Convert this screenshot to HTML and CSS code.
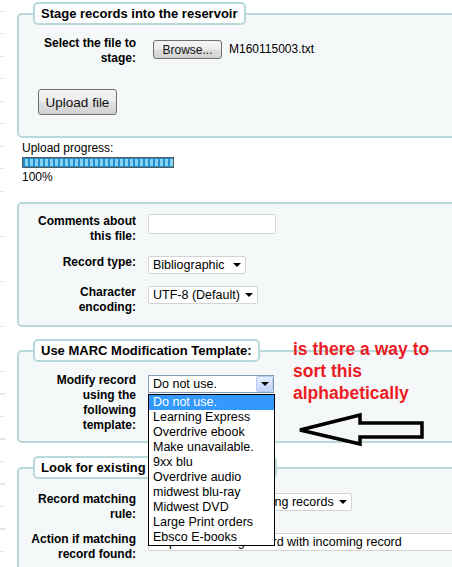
FILE: index.html
```html
<!DOCTYPE html>
<html lang="en">
<head>
  <meta charset="UTF-8">
  <meta name="viewport" content="width=device-width, initial-scale=1.0">
  <title>Stage MARC records for import</title>
  <link rel="stylesheet" href="styles.css">
</head>
<body>
  <div class="sidebar"></div>

  <div class="main">
    <fieldset class="rows stage">
      <legend>Stage records into the reservoir</legend>
      <div class="row">
        <label for="fileToUpload" class="row-label">Select the file to stage:</label>
        <div class="file-field" id="fileToUpload">
          <button type="button" class="btn-browse">Browse...</button>
          <span class="file-name">M160115003.txt</span>
        </div>
      </div>
      <button type="button" class="btn-upload">Upload file</button>
    </fieldset>

    <div class="progress">
      <div>Upload progress:</div>
      <div class="progress-bar"></div>
      <div>100%</div>
    </div>

    <fieldset class="rows options">
      <div class="row">
        <label for="comments" class="row-label">Comments about this file:</label>
        <input type="text" id="comments" class="text-input">
      </div>
      <div class="row">
        <label for="recordType" class="row-label">Record type:</label>
        <span class="select">
          <select id="recordType" class="w-record-type">
            <option>Bibliographic</option>
          </select>
        </span>
      </div>
      <div class="row">
        <label for="encoding" class="row-label">Character encoding:</label>
        <span class="select">
          <select id="encoding" class="w-encoding">
            <option>UTF-8 (Default)</option>
          </select>
        </span>
      </div>
    </fieldset>

    <fieldset class="rows template">
      <legend>Use MARC Modification Template:</legend>
      <div class="row">
        <label for="template" class="row-label">Modify record using the following template:</label>
        <span class="select select-xp">
          <select id="template" class="w-template">
            <option>Do not use.</option>
          </select>
          <ul class="select-menu">
            <li class="is-selected">Do not use.</li>
            <li>Learning Express</li>
            <li>Overdrive ebook</li>
            <li>Make unavailable.</li>
            <li>9xx blu</li>
            <li>Overdrive audio</li>
            <li>midwest blu-ray</li>
            <li>Midwest DVD</li>
            <li>Large Print orders</li>
            <li>Ebsco E-books</li>
          </ul>
        </span>
      </div>
    </fieldset>

    <fieldset class="rows matching">
      <legend>Look for existing records in catalog?</legend>
      <div class="row">
        <label for="matchRule" class="row-label">Record matching rule:</label>
        <span class="select">
          <select id="matchRule" class="w-rule">
            <option>Do not look for matching records</option>
          </select>
        </span>
      </div>
      <div class="row">
        <label for="overlayAction" class="row-label">Action if matching record found:</label>
        <span class="select">
          <select id="overlayAction" class="w-action">
            <option>Replace existing record with incoming record</option>
          </select>
        </span>
      </div>
    </fieldset>

    <p class="note">is there a way to sort this alphabetically</p>
    <svg class="note-arrow" width="128" height="36" viewBox="0 0 128 36">
      <polygon points="2,18 62,3 62,11 124,11 124,25 62,25 62,32" fill="none" stroke="#000" stroke-width="3.5"/>
    </svg>
  </div>
</body>
</html>
```

FILE: styles.css
```css
:root {
  --field-border: #b9d8d9;
  --field-bg: #f4f8f9;
  --control-border: #d4d4d4;
  --note-red: #ed1c24;
}

html,
body {
  height: 100%;
  overflow: hidden;
}

body {
  margin: 0;
  display: flex;
  background: #fff;
  color: #000;
  font-family: "Liberation Sans", Arial, sans-serif;
  font-size: 12px;
  line-height: 15px;
}

/* edge of the left menu, mostly cut off */
.sidebar {
  flex: none;
  width: 5px;
  background: repeating-linear-gradient(to bottom, transparent 0 11px, #e6e6e6 11px 12px, transparent 12px 22.5px);
}

.main {
  position: relative;
  flex: none;
  width: 460px;
  margin-left: 12px;
}

.rows {
  margin: 0;
  padding: 11px 0 10px 10px;
  min-width: 0;
  border: 2px solid var(--field-border);
  border-radius: 5px;
  background: var(--field-bg);
}

.rows legend {
  margin-left: 4px;
  padding: 2px 6px;
  border: 2px solid var(--field-border);
  border-radius: 5px;
  background: #fff;
  font-size: 13px;
  font-weight: bold;
  line-height: 15px;
}

.stage {
  margin-top: 2px;
  padding-bottom: 21px;
}

.options {
  margin-top: 17px;
  padding-top: 10px;
}

.template {
  margin-top: 12px;
  padding-bottom: 8px;
}

.matching {
  margin-top: 13px;
  padding-top: 13px;
}

.row {
  display: grid;
  grid-template-columns: 107px auto;
  column-gap: 12px;
  align-items: start;
  justify-content: start;
}

.row + .row {
  margin-top: 11px;
}

.matching .row + .row {
  margin-top: 10px;
}

.row-label {
  text-align: right;
  font-weight: bold;
}

.file-field {
  display: flex;
  align-items: center;
  gap: 7px;
  margin: 4px 0 0 5px;
}

.btn-browse,
.btn-upload {
  padding: 0;
  border: 1px solid #707070;
  border-radius: 3px;
  background: linear-gradient(#f4f4f4, #ececec 48%, #dfdfdf 52%, #d2d2d2);
  color: #111;
  font-family: "Liberation Sans", Arial, sans-serif;
}

.btn-browse {
  width: 69px;
  height: 19px;
  font-size: 12px;
}

.btn-upload {
  display: block;
  width: 79px;
  height: 26px;
  margin: 23px 0 0 9px;
  font-size: 13.5px;
}

.progress {
  margin-top: 3px;
  padding-left: 5px;
}

.progress-bar {
  box-sizing: border-box;
  width: 152px;
  height: 11px;
  margin: 1px 0 2px;
  border: 1px solid #58595b;
  background: repeating-linear-gradient(90deg, #1f8fd0 0 2px, #88d2f4 2px 5px);
  box-shadow: inset 0 1px 0 #1f8fd0, inset 0 -1px 0 #1f8fd0;
}

.text-input {
  box-sizing: border-box;
  width: 128px;
  height: 20px;
  margin: 0;
  padding: 0 3px;
  border: 1px solid var(--control-border);
  border-radius: 2px;
  background: #fff;
}

.select {
  position: relative;
  display: inline-block;
  margin-top: 1px;
}

.select select {
  display: block;
  box-sizing: border-box;
  height: 18px;
  margin: 0;
  padding: 0 12px 0 4px;
  border: 1px solid var(--control-border);
  border-radius: 2px;
  background: #fff;
  color: #000;
  font-family: "Liberation Sans", Arial, sans-serif;
  font-size: 12.5px;
  appearance: none;
  -webkit-appearance: none;
}

.select::after {
  content: "";
  position: absolute;
  top: 7px;
  right: 5px;
  border-top: 4px solid #000;
  border-left: 4px solid transparent;
  border-right: 4px solid transparent;
  pointer-events: none;
}

.w-record-type { width: 98px; }
.w-encoding { width: 110px; }
.w-template { width: 126px; }
.w-rule { width: 204px; }
.w-action { width: 330px; }

/* old XP style combo with the list dropped open */
.select-xp {
  margin-top: 2px;
}

.select-xp select {
  border-color: #7f9db9;
  border-radius: 0;
}

.select-xp::before {
  content: "";
  position: absolute;
  top: 1px;
  right: 1px;
  bottom: 1px;
  width: 15px;
  border: 1px solid #b7cbf5;
  border-radius: 2px;
  background: linear-gradient(#e3ecfd, #c2d4fb);
}

.select-menu {
  position: absolute;
  top: calc(100% + 1px);
  left: 0;
  z-index: 2;
  box-sizing: border-box;
  width: 127px;
  margin: 0;
  padding: 0;
  list-style: none;
  border: 1px solid #000;
  background: #fff;
  font-size: 12.5px;
  line-height: 15px;
}

.select-menu li {
  padding-left: 4px;
  white-space: nowrap;
}

.select-menu .is-selected {
  background: #3399ff;
  color: #fff;
}

/* pasted-on annotation */
.note {
  position: absolute;
  top: 338px;
  left: 276px;
  width: 150px;
  margin: 0;
  color: var(--note-red);
  font-size: 17.5px;
  font-weight: bold;
  line-height: 22px;
}

.note-arrow {
  position: absolute;
  top: 412px;
  left: 281px;
}
```
